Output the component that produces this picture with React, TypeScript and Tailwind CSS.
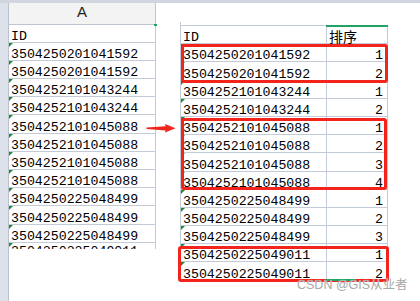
import React from 'react';

const mono = { fontFamily: '"Liberation Mono", monospace' };

const leftIds = [
  '3504250201041592',
  '3504250201041592',
  '3504252101043244',
  '3504252101043244',
  '3504252101045088',
  '3504252101045088',
  '3504252101045088',
  '3504252101045088',
  '3504250225048499',
  '3504250225048499',
  '3504250225048499',
];

const rightRows: [string, number][] = [
  ['3504250201041592', 1],
  ['3504250201041592', 2],
  ['3504252101043244', 1],
  ['3504252101043244', 2],
  ['3504252101045088', 1],
  ['3504252101045088', 2],
  ['3504252101045088', 3],
  ['3504252101045088', 4],
  ['3504250225048499', 1],
  ['3504250225048499', 2],
  ['3504250225048499', 3],
  ['3504250225049011', 1],
  ['3504250225049011', 2],
];

function Flag() {
  return (
    <svg className="absolute left-0 top-0" width="4" height="4" viewBox="0 0 4 4">
      <polygon points="0,0 4,0 0,4" fill="#1f8a34" />
    </svg>
  );
}

function RedBox({ className }: { className: string }) {
  return <div className={`absolute border-[3px] border-[#f3241b] rounded-[3px] ${className}`} />;
}

export default function App() {
  return (
    <div className="relative w-[420px] h-[301px] bg-white overflow-hidden text-black" style={mono}>
      <div className="h-[3px] bg-[#d1d6de]" />
      <div className="flex h-[298px]">
        {/* row header strip */}
        <div className="w-[9px] bg-[#dde2ea] border-r border-[#b9c1cd]" />

        {/* column A */}
        <div className="w-[147px] flex flex-col">
          <div
            className="h-[21.5px] bg-[#f3f3f3] border-b border-r border-[#c0c6cf] flex items-center justify-center pb-[2px] text-[15px] text-[#222]"
            style={{ fontFamily: '"Liberation Sans", Arial, sans-serif' }}
          >
            A
          </div>
          <div className="h-[18.2px] border-b border-r border-[#c3cad8] flex items-end pl-[2px] text-[13.25px] leading-[11px]">
            ID
          </div>
          {leftIds.map((id, i) => (
            <div
              key={i}
              className="relative h-[18.2px] border-b border-r border-[#c3cad8] flex items-end pl-[2px] text-[13.25px] leading-[11px]"
            >
              <Flag />
              {id}
            </div>
          ))}
          <div className="relative h-[6px] border-r border-[#c3cad8] overflow-hidden pl-[2px] pt-[2px] text-[13.25px] leading-[13px]">
            <Flag />
            3504250225049011
          </div>
        </div>

        {/* result table */}
        <div className="ml-[24px] mt-[19px] self-start border-l border-[#c3cad8] pt-[3px]">
          <div className="grid grid-cols-[146px_61px] border-t border-[#c3cad8]">
            <div className="h-[18.2px] border-b border-r border-[#c3cad8] flex items-end pl-[2px] text-[13.25px] leading-[11px]">
              ID
            </div>
            <div
              className="h-[18.2px] border-b border-r border-[#c3cad8] flex items-end pl-[2px] pb-[1px] text-[14px] leading-[11px]"
              style={{ fontFamily: '"Noto Sans CJK SC", sans-serif' }}
            >
              排序
            </div>
            {rightRows.map(([id, n], i) => (
              <React.Fragment key={i}>
                <div className="relative h-[18.2px] border-b border-r border-[#c3cad8] flex items-end pl-[2px] text-[13.25px] leading-[11px]">
                  <Flag />
                  {id}
                </div>
                <div className="h-[18.2px] border-b border-r border-[#c3cad8] flex items-end justify-end pr-[4px] text-[13.25px] leading-[11px]">
                  {n}
                </div>
              </React.Fragment>
            ))}
          </div>
        </div>
      </div>

      {/* selection markers */}
      <div className="absolute left-[154px] top-[24px] w-[3px] h-[2px] bg-[#21a366]" />
      <div className="absolute left-[326px] top-[25px] w-[62px] h-[2px] bg-[#21a366]" />

      {/* highlight boxes */}
      <RedBox className="left-[181px] top-[44px] w-[207px] h-[39px]" />
      <RedBox className="left-[181px] top-[118px] w-[206px] h-[72px]" />
      <RedBox className="left-[178px] top-[246px] w-[211px] h-[36px]" />
      <div className="absolute left-[326px] top-[279px] w-[30px] h-[2px] bg-[#21a366]" />

      {/* arrow */}
      <svg className="absolute left-[145px] top-[122px]" width="32" height="12" viewBox="145 122 32 12">
        <path d="M146.5 127.6 L165.5 126.2 L165 124 L175.5 128.3 L165 132.6 L165.5 130.4 L146.5 129 Z" fill="#f3241b" />
      </svg>

      {/* watermark */}
      <div
        className="absolute left-[297px] top-[278px] text-[12.5px] leading-[14px] text-[#a8a8a8] whitespace-nowrap"
        style={{ fontFamily: '"Liberation Sans", "Noto Sans CJK SC", sans-serif', textShadow: '0 0 1px #fff' }}
      >
        CSDN @GIS从业者
      </div>
    </div>
  );
}
